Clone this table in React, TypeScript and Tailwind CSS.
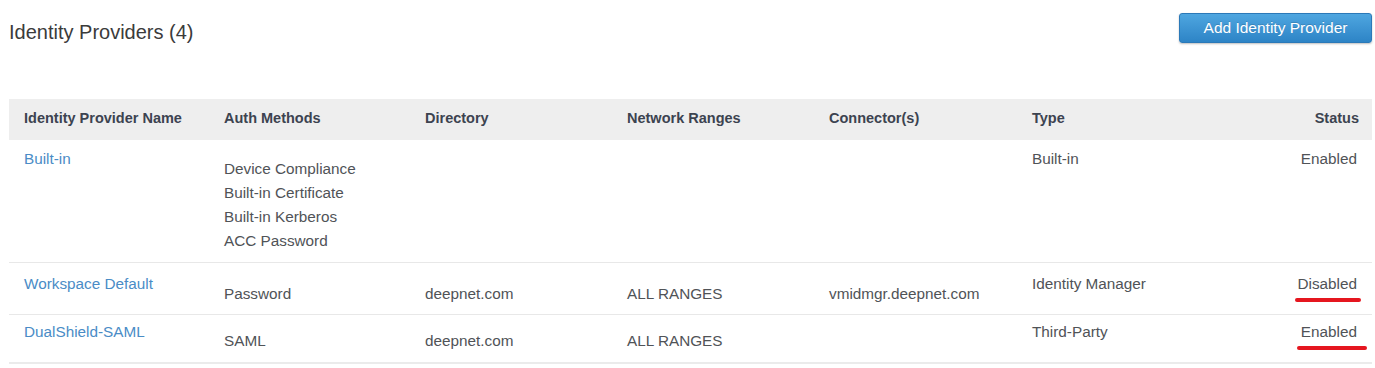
import React from 'react';

type Provider = {
  name: string;
  methods: string[];
  directory?: string;
  ranges?: string;
  connector?: string;
  type: string;
  status: 'Enabled' | 'Disabled';
  // red marker under the status, with its own overhang
  mark?: string;
  // vertical spacing differs slightly per row
  pt: string;
  listPt: string;
  pb: string;
  last?: boolean;
};

const providers: Provider[] = [
  {
    name: 'Built-in',
    methods: ['Device Compliance', 'Built-in Certificate', 'Built-in Kerberos', 'ACC Password'],
    type: 'Built-in',
    status: 'Enabled',
    pt: 'pt-[9px]',
    listPt: 'pt-[17px]',
    pb: 'pb-[9px]',
  },
  {
    name: 'Workspace Default',
    methods: ['Password'],
    directory: 'deepnet.com',
    ranges: 'ALL RANGES',
    connector: 'vmidmgr.deepnet.com',
    type: 'Identity Manager',
    status: 'Disabled',
    mark: '-left-[2px] -right-[4px]',
    pt: 'pt-[11px]',
    listPt: 'pt-[19px]',
    pb: 'pb-[8px]',
  },
  {
    name: 'DualShield-SAML',
    methods: ['SAML'],
    directory: 'deepnet.com',
    ranges: 'ALL RANGES',
    type: 'Third-Party',
    status: 'Enabled',
    mark: '-left-[4px] -right-[10px]',
    pt: 'pt-[7px]',
    listPt: 'pt-[14px]',
    pb: 'pb-[9px]',
    last: true,
  },
];

const columns = ['Identity Provider Name', 'Auth Methods', 'Directory', 'Network Ranges', 'Connector(s)', 'Type'];

const grid = 'grid grid-cols-[200px_201px_202px_202px_203px_1fr_auto]';

const ListCell: React.FC<{ items: string[]; pt: string }> = ({ items, pt }) => (
  <div className={`pl-[15px] ${pt}`}>
    {items.map((item) => (
      <div key={item} className="leading-6">
        {item}
      </div>
    ))}
  </div>
);

export default function App() {
  return (
    <div
      className="w-full h-[368px] bg-white pl-[9px] pr-[3px] text-[#505357]"
      style={{ fontFamily: '"Liberation Sans", Arial, sans-serif' }}
    >
      <div className="flex items-start justify-between pt-[13px]">
        <h1 className="mt-[7px] text-[20px] leading-6 text-[#3b3b3b]">Identity Providers (4)</h1>
        <button className="h-[30px] w-[193px] rounded-[3px] border border-[#2b79b8] bg-gradient-to-b from-[#4ea6e0] to-[#2d84c6] text-[15.5px] leading-[28px] text-white shadow-[0_1px_2px_rgba(0,0,0,0.25)] [text-shadow:0_-1px_0_rgba(0,0,0,0.15)]">
          Add Identity Provider
        </button>
      </div>

      <div className="mt-[55px] text-[15.3px]">
        <div className={`${grid} bg-[#eeeeee] pt-[9px] pb-[12px] text-[14.5px] font-bold leading-5 text-[#3c4350]`}>
          {columns.map((c) => (
            <div key={c} className="pl-[15px]">
              {c}
            </div>
          ))}
          <div className="pr-[13px] text-right">Status</div>
        </div>

        {providers.map((p) => (
          <div
            key={p.name}
            className={`${grid} ${p.pb} ${p.last ? 'border-b-2 border-[#ebebeb]' : 'border-b border-[#e8e8e8]'}`}
          >
            <div className={`pl-[15px] ${p.pt} leading-5 text-[#4a8cc6]`}>{p.name}</div>
            <ListCell items={p.methods} pt={p.listPt} />
            <ListCell items={p.directory ? [p.directory] : []} pt={p.listPt} />
            <ListCell items={p.ranges ? [p.ranges] : []} pt={p.listPt} />
            <ListCell items={p.connector ? [p.connector] : []} pt={p.listPt} />
            <div className={`pl-[15px] ${p.pt} leading-5`}>{p.type}</div>
            <div className={`pr-[15px] ${p.pt} text-right leading-5`}>
              <span className="relative inline-block">
                {p.status}
                {p.mark && (
                  <span className={`absolute ${p.mark} top-[24px] h-[4px] rounded-full bg-[#e5161f]`} />
                )}
              </span>
            </div>
          </div>
        ))}
      </div>
    </div>
  );
}
